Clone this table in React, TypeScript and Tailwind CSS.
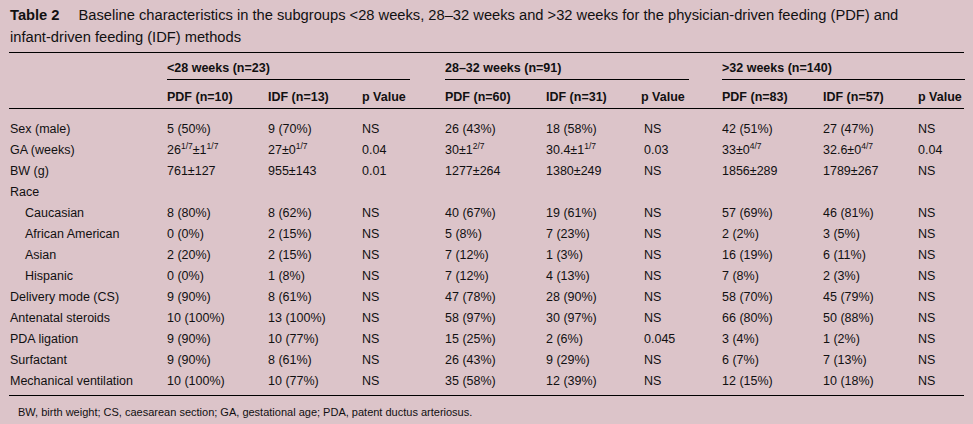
import React from "react";

type Cell = React.ReactNode;

const S = ({ children }: { children: React.ReactNode }) => (
  <span className="relative -top-[5px] text-[8.5px] leading-none">{children}</span>
);

const rows: { label: string; indent?: boolean; cells: Cell[] }[] = [
  { label: "Sex (male)", cells: ["5 (50%)", "9 (70%)", "NS", "26 (43%)", "18 (58%)", "NS", "42 (51%)", "27 (47%)", "NS"] },
  {
    label: "GA (weeks)",
    cells: [
      <>26<S>1/7</S>±1<S>1/7</S></>,
      <>27±0<S>1/7</S></>,
      "0.04",
      <>30±1<S>2/7</S></>,
      <>30.4±1<S>1/7</S></>,
      "0.03",
      <>33±0<S>4/7</S></>,
      <>32.6±0<S>4/7</S></>,
      "0.04",
    ],
  },
  { label: "BW (g)", cells: ["761±127", "955±143", "0.01", "1277±264", "1380±249", "NS", "1856±289", "1789±267", "NS"] },
  { label: "Race", cells: ["", "", "", "", "", "", "", "", ""] },
  { label: "Caucasian", indent: true, cells: ["8 (80%)", "8 (62%)", "NS", "40 (67%)", "19 (61%)", "NS", "57 (69%)", "46 (81%)", "NS"] },
  { label: "African American", indent: true, cells: ["0 (0%)", "2 (15%)", "NS", "5 (8%)", "7 (23%)", "NS", "2 (2%)", "3 (5%)", "NS"] },
  { label: "Asian", indent: true, cells: ["2 (20%)", "2 (15%)", "NS", "7 (12%)", "1 (3%)", "NS", "16 (19%)", "6 (11%)", "NS"] },
  { label: "Hispanic", indent: true, cells: ["0 (0%)", "1 (8%)", "NS", "7 (12%)", "4 (13%)", "NS", "7 (8%)", "2 (3%)", "NS"] },
  { label: "Delivery mode (CS)", cells: ["9 (90%)", "8 (61%)", "NS", "47 (78%)", "28 (90%)", "NS", "58 (70%)", "45 (79%)", "NS"] },
  { label: "Antenatal steroids", cells: ["10 (100%)", "13 (100%)", "NS", "58 (97%)", "30 (97%)", "NS", "66 (80%)", "50 (88%)", "NS"] },
  { label: "PDA ligation", cells: ["9 (90%)", "10 (77%)", "NS", "15 (25%)", "2 (6%)", "0.045", "3 (4%)", "1 (2%)", "NS"] },
  { label: "Surfactant", cells: ["9 (90%)", "8 (61%)", "NS", "26 (43%)", "9 (29%)", "NS", "6 (7%)", "7 (13%)", "NS"] },
  { label: "Mechanical ventilation", cells: ["10 (100%)", "10 (77%)", "NS", "35 (58%)", "12 (39%)", "NS", "12 (15%)", "10 (18%)", "NS"] },
];

const grid = "grid grid-cols-[158px_101px_94px_83px_101px_96px_80px_101px_95px_47px]";

export default function App() {
  return (
    <div
      className="w-[973px] h-[424px] bg-[#dcc4c9] text-[#111011] overflow-hidden"
      style={{ fontFamily: '"Liberation Sans", Arial, sans-serif' }}
    >
      <div className="px-[9px]">
        <div className="pt-[4px] pl-px text-[14.7px] leading-[22px]">
          <span className="font-bold">Table 2</span>
          <span className="inline-block w-[19px]" />
          Baseline characteristics in the subgroups &lt;28 weeks, 28–32 weeks and &gt;32 weeks for the physician-driven feeding (PDF) and
          <br />
          infant-driven feeding (IDF) methods
        </div>
        <div className="mt-[4px] border-t border-black text-[12.5px]">
          <div className={grid}>
            <div />
            <div className="col-span-3 mr-[35px] pt-[5px] pb-px leading-[20px] font-bold border-b border-black">
              &lt;28 weeks (n=23)
            </div>
            <div className="col-span-3 mr-[33px] pt-[5px] pb-px leading-[20px] font-bold border-b border-black">
              28–32 weeks (n=91)
            </div>
            <div className="col-span-3 pt-[5px] pb-px leading-[20px] font-bold border-b border-black">
              &gt;32 weeks (n=140)
            </div>
          </div>
          <div className={`${grid} border-b border-black pt-[7px] pb-[1px] leading-[20px] font-bold`}>
            <div />
            <div>PDF (n=10)</div>
            <div>IDF (n=13)</div>
            <div>p Value</div>
            <div>PDF (n=60)</div>
            <div>IDF (n=31)</div>
            <div className="-ml-px">p Value</div>
            <div>PDF (n=83)</div>
            <div>IDF (n=57)</div>
            <div>p Value</div>
          </div>
          <div className="pt-[10px] pb-[3px] border-b border-black">
            {rows.map((r, i) => (
              <div key={i} className={`${grid} leading-[21px] h-[21px]`}>
                <div className={r.indent ? "pl-[16px] whitespace-nowrap" : "pl-px whitespace-nowrap"}>{r.label}</div>
                {r.cells.map((c, j) => (
                  <div key={j} className={j === 5 ? "ml-[2px] whitespace-nowrap" : "whitespace-nowrap"}>
                    {c}
                  </div>
                ))}
              </div>
            ))}
          </div>
          <div className="pt-[8px] pl-[9px] text-[11px] leading-[16px]">
            BW, birth weight; CS, caesarean section; GA, gestational age; PDA, patent ductus arteriosus.
          </div>
        </div>
      </div>
    </div>
  );
}
